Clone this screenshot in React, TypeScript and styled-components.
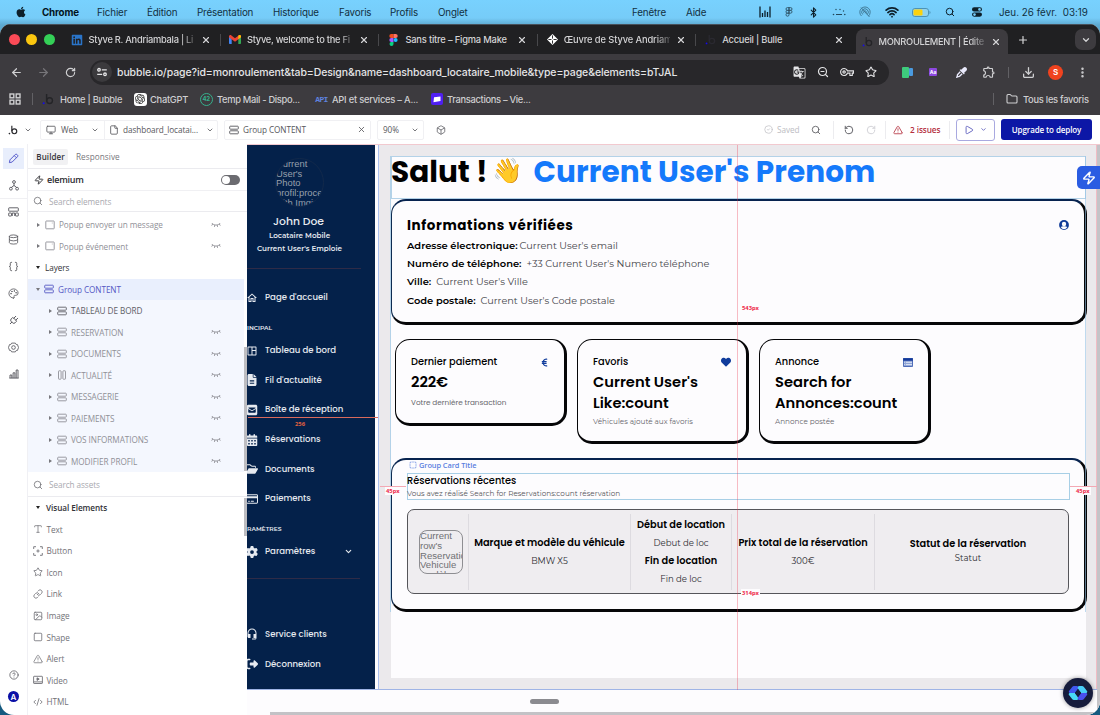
import React, { ReactNode } from "react";
import styled, { createGlobalStyle } from "styled-components";
import {
  ArrowLeft, ArrowRight, RotateCw, RotateCcw, Search, ZoomOut, Star, X, Plus, ChevronDown, Download,
  EllipsisVertical, Folder, Monitor, File, Box, CircleCheck, TriangleAlert, Play,
  Database, Braces, Palette, Plug, CircleQuestionMark, Zap, Type, Link, Image,
  Square, CodeXml, Bluetooth, Wifi, SquareDashed,
} from "lucide-react";
import {
  FaApple, FaLinkedin, FaHeart, FaEuroSign, FaCalendarDays, FaRegFolderOpen, FaFileLines, FaGear,
  FaSquareEnvelope, FaRegCreditCard, FaRightFromBracket, FaEyeDropper,
} from "react-icons/fa6";
import {
  MdOutlineHome, MdOutlineSpaceDashboard, MdHeadsetMic, MdOutlineVpnKey, MdGTranslate,
  MdOutlineExtension,
} from "react-icons/md";
import { SiOpenai } from "react-icons/si";

const mac = `Inter, "Liberation Sans", sans-serif`;
const ui = `"Open Sans", "Noto Sans", sans-serif`;
const poppins = `Poppins, Inter, sans-serif`;
const montserrat = `Montserrat, Inter, sans-serif`;

const GlobalStyle = createGlobalStyle`
  * { box-sizing: border-box; }
  body { margin: 0; overflow: hidden; font-family: ${ui}; }
  svg { display: block; flex: none; }
`;

const Desktop = styled.div`
  width: 1100px;
  height: 715px;
  overflow: hidden;
  display: flex;
  flex-direction: column;
  background: linear-gradient(#78d1fe 0, #76ccf8 18px, #5da9d0 25px, #14506f 60%, #155a80 100%);
`;

const Row = styled.div<{ $gap?: number }>`
  display: flex;
  align-items: center;
  gap: ${({ $gap }) => $gap || 0}px;
`;

const Slot = styled.span<{ $w: number; $c?: string }>`
  width: ${({ $w }) => $w}px;
  flex: none;
  display: flex;
  align-items: center;
  justify-content: center;
  color: ${({ $c }) => $c || "inherit"};
`;

const Spacer = styled.div`
  flex: 1;
`;

const Rule = styled.span<{ $h: number; $c: string }>`
  width: 1px;
  height: ${({ $h }) => $h}px;
  background: ${({ $c }) => $c};
  flex: none;
`;

/* ---------- mac menu bar ---------- */

const MenuBar = styled.div`
  height: 24px;
  flex: none;
  display: flex;
  align-items: center;
  font: 400 9.8px ${mac};
  letter-spacing: -0.16px;
  color: #12303f;
  padding-right: 12px;
  svg { color: #0d1f2a; }
`;
const MenuItem = styled.span<{ $w: number; $bold?: boolean }>`
  width: ${({ $w }) => $w}px;
  flex: none;
  font-weight: ${({ $bold }) => ($bold ? 700 : 400)};
  color: ${({ $bold }) => ($bold ? "#04141d" : "inherit")};
`;
const Clock = styled.span`
  margin-left: 8px;
  white-space: pre;
  letter-spacing: 0.03px;
`;

/* ---------- browser chrome ---------- */

const BrowserWindow = styled.div`
  flex: 1;
  min-height: 0;
  display: flex;
  flex-direction: column;
  border-radius: 11px 11px 14px 14px;
  overflow: hidden;
  background: #fff;
  position: relative;
`;
const TabStrip = styled.div`
  height: 30px;
  flex: none;
  background: #202022;
  border-top: 1px solid #47505a;
  display: flex;
  align-items: center;
  padding-left: 9px;
  font: 500 9.3px ${mac};
  letter-spacing: -0.22px;
  color: #d4d4d6;
`;
const Light = styled.span<{ $c: string }>`
  width: 11px;
  height: 11px;
  border-radius: 50%;
  background: ${({ $c }) => $c};
`;
const Tab = styled.div<{ $active?: boolean }>`
  width: ${({ $active }) => ($active ? 152 : 158.4)}px;
  height: ${({ $active }) => ($active ? "25px" : "12px")};
  flex: none;
  display: flex;
  align-items: center;
  gap: 6px;
  padding-left: ${({ $active }) => ($active ? 5 : 9)}px;
  margin-left: ${({ $active }) => ($active ? 2 : 0)}px;
  align-self: ${({ $active }) => ($active ? "flex-end" : "center")};
  background: ${({ $active }) => ($active ? "#3d3b3f" : "transparent")};
  border-radius: ${({ $active }) => ($active ? "8px 8px 0 0" : "0")};
  border-left: 1px solid ${({ $active }) => ($active ? "transparent" : "#48484b")};
  &:nth-of-type(2) { border-left-color: transparent; }
`;
const TabTitle = styled.span<{ $fade?: boolean; $ls?: number }>`
  width: 106px;
  flex: none;
  white-space: nowrap;
  line-height: 14px;
  letter-spacing: ${({ $ls }) => ($ls === undefined ? -0.22 : $ls)}px;
  ${({ $fade }) => $fade && "mask-image: linear-gradient(90deg, #000 86%, transparent 104%);"}
`;
const TabMenu = styled.span`
  width: 21px;
  height: 21px;
  border-radius: 7px;
  background: #3d3b3f;
  display: flex;
  align-items: center;
  justify-content: center;
  margin-right: 4px;
`;
const Toolbar = styled.div`
  height: 36px;
  flex: none;
  background: #3d3b3f;
  display: flex;
  align-items: center;
  padding-left: 3px;
  color: #d0d0d2;
`;
const AddressBar = styled.div`
  width: 799px;
  height: 25px;
  border-radius: 13px;
  background: #28272a;
  display: flex;
  align-items: center;
  padding: 0 6px 0 2px;
  margin-left: 6px;
  margin-right: 5px;
  font: 500 10.5px ${mac};
  letter-spacing: -0.1px;
  color: #e4e4e6;
`;
const TuneButton = styled.span`
  width: 20px;
  height: 20px;
  border-radius: 50%;
  background: #3b3a3d;
  display: flex;
  align-items: center;
  justify-content: center;
  margin-right: 5px;
`;
const Avatar = styled.span<{ $c: string; $s: number }>`
  width: ${({ $s }) => $s}px;
  height: ${({ $s }) => $s}px;
  border-radius: 50%;
  background: ${({ $c }) => $c};
  color: #fff;
  font: 600 8px ${mac};
  display: flex;
  align-items: center;
  justify-content: center;
`;
const Bookmarks = styled.div`
  height: 25px;
  flex: none;
  background: #3d3b3f;
  display: flex;
  align-items: center;
  padding: 0 10px 7px 0;
  font: 500 9.3px ${mac};
  letter-spacing: -0.22px;
  color: #cfcfd1;
`;
const Bookmark = styled.span<{ $w: number; $ls?: number }>`
  width: ${({ $w }) => $w}px;
  flex: none;
  white-space: nowrap;
  letter-spacing: ${({ $ls }) => ($ls === undefined ? -0.25 : $ls)}px;
`;
const Badge = styled.span<{ $c: string; $w?: number; $h?: number; $r?: number }>`
  width: ${({ $w }) => $w || 12}px;
  height: ${({ $h }) => $h || 12}px;
  border-radius: ${({ $r }) => ($r === undefined ? 3 : $r)}px;
  background: ${({ $c }) => $c};
  display: flex;
  align-items: center;
  justify-content: center;
`;
const TempBadge = styled.span`
  width: 13px;
  height: 13px;
  border-radius: 50%;
  border: 1.5px solid #35b08c;
  color: #35b08c;
  font: 700 6px/10px ${mac};
  letter-spacing: -0.3px;
  text-align: center;
`;
const ApiMark = styled.span`
  font: 700 8px "Liberation Mono", monospace;
  letter-spacing: -0.6px;
  color: #5f83e0;
`;
const AaMark = styled.span`
  font: 700 5px ${mac};
  color: #fff;
`;

/* ---------- editor bar ---------- */

const EditorBar = styled.div`
  height: 29px;
  flex: none;
  background: #fff;
  display: flex;
  align-items: center;
  font: 400 8.2px ${ui};
  letter-spacing: -0.07px;
  color: #57575c;
`;
const Picker = styled.div<{ $w: number; $ml?: number }>`
  width: ${({ $w }) => $w}px;
  height: 20px;
  margin-left: ${({ $ml }) => $ml || 0}px;
  border: 1px solid #f0f0f3;
  border-radius: 2px;
  display: flex;
  align-items: center;
  white-space: nowrap;
`;
const Label = styled.span<{ $w?: number; $c?: string; $bold?: boolean }>`
  width: ${({ $w }) => ($w ? `${$w}px` : "auto")};
  flex: none;
  white-space: nowrap;
  color: ${({ $c }) => $c || "inherit"};
  font-weight: ${({ $bold }) => ($bold ? 600 : 400)};
`;
const PreviewButton = styled.div`
  width: 39px;
  height: 22px;
  margin: 0 6px 0 6px;
  border: 1px solid #a9a9e0;
  border-radius: 3px;
  display: flex;
  align-items: center;
  justify-content: space-between;
  padding: 0 7px;
  color: #5152b8;
`;
const DeployButton = styled.div`
  width: 91px;
  height: 21px;
  border-radius: 3px;
  margin-right: 8px;
  background: #0c17a6;
  color: #fff;
  font: 600 8px/21px ${ui};
  letter-spacing: -0.1px;
  text-align: center;
`;

/* ---------- left side ---------- */

const Body = styled.div`
  flex: 1;
  min-height: 0;
  display: flex;
`;
const Rail = styled.div`
  width: 28px;
  flex: none;
  border-right: 1px solid #f0f0f4;
  display: flex;
  flex-direction: column;
  align-items: center;
  padding-top: 1px;
  color: #55555b;
`;
const RailItem = styled.div<{ $active?: boolean; $line?: boolean }>`
  width: 27px;
  height: 27px;
  display: flex;
  align-items: center;
  justify-content: center;
  color: ${({ $active }) => ($active ? "#4a50c8" : "inherit")};
  background: ${({ $active }) => ($active ? "linear-gradient(#e8eefc, #e8eefc) 3px 3px / 21px 21px no-repeat" : "none")};
  border-bottom: 1px solid ${({ $line }) => ($line ? "#f0f0f3" : "transparent")};
`;
const RailFoot = styled.div`
  margin-top: auto;
  margin-bottom: 13px;
  display: flex;
  flex-direction: column;
  align-items: center;
  gap: 11px;
`;
const Panel = styled.div`
  width: 219px;
  flex: none;
  background: #fff;
  display: flex;
  flex-direction: column;
  font: 400 8.2px ${ui};
  letter-spacing: -0.07px;
`;
const PanelTabs = styled.div`
  height: 25px;
  flex: none;
  border-bottom: 1px solid #ebebef;
  display: flex;
  align-items: center;
  padding: 1px 0 0 5px;
  gap: 8px;
  color: #77777d;
  letter-spacing: 0.06px;
`;
const PanelTabActive = styled.span`
  width: 35px;
  height: 16px;
  border-radius: 2px;
  background: #f1f1f3;
  color: #333338;
  font-weight: 600;
  font-size: 8px;
  line-height: 16px;
  text-align: center;
`;
const PluginRow = styled.div`
  height: 22px;
  flex: none;
  border-bottom: 1px solid #f0f0f3;
  display: flex;
  align-items: center;
  padding: 0 7px 0 6px;
  gap: 3px;
  font-size: 9px;
  font-weight: 600;
  letter-spacing: -0.25px;
  color: #2d2d31;
`;
const Toggle = styled.span`
  width: 19px;
  height: 10px;
  border-radius: 5px;
  background: #6b6b70;
  padding: 1px;
  &::after {
    content: "";
    display: block;
    width: 8px;
    height: 8px;
    border-radius: 50%;
    background: #fff;
  }
`;
const SearchRow = styled.div<{ $h: number }>`
  height: ${({ $h }) => $h}px;
  flex: none;
  border-bottom: 1px solid #ebebef;
  display: flex;
  align-items: center;
  padding-left: 5px;
  gap: 6px;
  color: #a9a9af;
  svg { color: #66666c; }
`;
const Tree = styled.div`
  height: 261px;
  flex: none;
  overflow: hidden;
  padding-top: 2px;
  padding-right: 3px;
  position: relative;
`;
const Nested = styled.div`
  background: #f4f7fe;
`;
const TreeRow = styled.div<{ $level: number; $selected?: boolean; $dim?: boolean; $head?: boolean }>`
  height: 21.53px;
  display: flex;
  align-items: center;
  padding-left: ${({ $level }) => 8 + $level * 12}px;
  background: ${({ $selected }) => ($selected ? "#e9effd" : "transparent")};
  color: ${({ $selected, $dim, $head }) => ($selected ? "#5558c4" : $head ? "#333338" : $dim ? "#909097" : "#606066")};
  white-space: nowrap;
`;
const Caret = styled.span<{ $open?: boolean; $dark?: boolean }>`
  width: 0;
  height: 0;
  border: solid transparent;
  ${({ $open, $dark }) =>
    $open
      ? `border-width: 3px 2.5px 0; border-top-color: ${$dark ? "#222" : "#77777c"};`
      : `border-width: 2.5px 0 2.5px 3px; border-left-color: #77777c; margin: 0 1px;`}
`;
const HiddenMark = styled.span`
  margin-left: auto;
  margin-right: 23px;
  color: #8e8e95;
`;
const ScrollThumb = styled.span<{ $top: number; $h: number }>`
  position: absolute;
  right: 0;
  top: ${({ $top }) => $top}px;
  width: 3px;
  height: ${({ $h }) => $h}px;
  background: #bdbdc1;
`;
const Assets = styled.div`
  flex: 1;
  position: relative;
  overflow: hidden;
`;
const AssetRow = styled.div<{ $head?: boolean }>`
  height: 21.55px;
  display: flex;
  align-items: center;
  padding-left: ${({ $head }) => ($head ? 8 : 5)}px;
  gap: ${({ $head }) => ($head ? 6 : 3.5)}px;
  font-weight: ${({ $head }) => ($head ? 600 : 400)};
  color: ${({ $head }) => ($head ? "#333338" : "#727278")};
`;

/* ---------- canvas ---------- */

const Canvas = styled.div`
  flex: 1;
  min-width: 0;
  background: #fdfcfe;
  border-top: 1px solid #f2c9cf;
  position: relative;
  display: flex;
  flex-direction: column;
`;
const Stage = styled.div`
  height: 545px;
  display: flex;
  border-bottom: 1px solid #9fb4e6;
`;
const Nav = styled.div`
  width: 128px;
  flex: none;
  background: #04214a;
  margin-right: 3px;
  overflow: hidden;
  color: #e6eaf0;
`;
const Profile = styled.div`
  height: 124px;
  width: 114px;
  padding: 13px 9px 0 0;
  display: flex;
  flex-direction: column;
  align-items: center;
  border-bottom: 1px solid #2e2b47;
`;
const Photo = styled.div`
  width: 49px;
  height: 49px;
  border-radius: 50%;
  border: 1px solid #12294a;
  overflow: hidden;
  font: 9.4px/9.7px "Liberation Sans", sans-serif;
  color: #98a0ac;
  white-space: pre;
`;
const UserName = styled.div`
  font: 500 10.8px/14px ${poppins};
  margin: 8px 2px 0 0;
`;
const UserRole = styled.div`
  font: 600 7.2px/12px ${montserrat};
  margin-top: 1px;
  white-space: nowrap;
`;
const NavItem = styled.div`
  height: 29.7px;
  display: flex;
  align-items: center;
  font: 500 8.55px ${poppins};
  white-space: nowrap;
  & > svg:first-child { margin-right: 7px; margin-left: -1px; }
`;
const NavCaption = styled.div<{ $h: number }>`
  padding-top: 10px;
  height: ${({ $h }) => $h}px;
  font: 600 6px/10px ${montserrat};
`;
const NavLinks = styled.div`
  padding-top: 14px;
`;
const NavRule = styled.div`
  width: 113px;
  height: 1px;
  background: #2e2b47;
  margin: 11px 0 41px;
`;
const Artboard = styled.div`
  width: 719px;
  background: #ebe9ec;
  border-left: 1px solid #a9bfee;
  border-right: 1px solid #f1bcc4;
  padding: 11px 11px 11px 12px;
`;
const Sheet = styled.div`
  width: 695px;
  height: 522px;
  background: #fdfcfe;
  font-family: ${poppins};
  color: #000;
`;
const Title = styled.div`
  height: 43px;
  box-shadow: inset 0 0 0 1px #b4d2e8;
  display: flex;
  padding-top: 15px;
  font-size: 29.5px;
  line-height: 1px;
  font-weight: 700;
  white-space: nowrap;
`;
const Wave = styled.span`
  font: 24.5px/1px "Noto Color Emoji";
  width: 31px;
  margin: -1px 10px 0 5px;
`;
const Blue = styled.span`
  color: #1479fb;
  letter-spacing: 0.07px;
`;
const Card = styled.div<{ $w?: number; $h: number; $big?: boolean }>`
  width: ${({ $w }) => ($w ? `${$w}px` : "696px")};
  height: ${({ $h }) => $h}px;
  flex: none;
  background: #fdfcfe;
  border: solid #060608;
  border-width: 1px 3px 3px 1px;
  ${({ $big }) => $big && "border-top-color: #07234f; border-left-color: #0e2c52; border-top-width: 2px;"}
  border-radius: 15px;
`;
const InfoCard = styled(Card)`
  padding: 15px 16px 0 15px;
  display: flex;
  justify-content: space-between;
  align-items: flex-start;
  & > svg { margin: 4px -1px 0 0; }
`;
const InfoTitle = styled.div`
  font-size: 13.5px;
  line-height: 20px;
  font-weight: 700;
  letter-spacing: 0.62px;
`;
const Field = styled.div<{ $gap: number }>`
  height: 18.2px;
  font: 600 9.9px/18px ${montserrat};
  display: flex;
  align-items: baseline;
  white-space: nowrap;
  span {
    margin-left: ${({ $gap }) => $gap}px;
    font-size: 9.72px;
    font-weight: 400;
    color: #46464b;
  }
`;
const Stats = styled.div`
  display: flex;
  align-items: flex-start;
  gap: 10px;
  padding: 14px 0 0 4px;
  height: 133px;
`;
const StatCard = styled(Card)`
  padding: 14px 13px 0 15px;
`;
const StatHead = styled.div`
  height: 16px;
  display: flex;
  align-items: center;
  justify-content: space-between;
  font-size: 9.8px;
  font-weight: 500;
  svg { color: #103c9c; }
`;
const StatValue = styled.div`
  font-size: 14.7px;
  line-height: 20.5px;
  font-weight: 600;
  white-space: pre;
  margin-top: 2px;
`;
const StatNote = styled.div<{ $mt: number; $light?: boolean }>`
  font: 400 7.28px/12px ${({ $light }) => ($light ? montserrat : poppins)};
  margin-top: ${({ $mt }) => $mt}px;
  color: #66666c;
  white-space: nowrap;
`;
const Bookings = styled(Card)`
  padding: 13px 13px 0 15px;
`;
const GroupTitle = styled.div`
  height: 27px;
  width: 663px;
  box-shadow: inset 0 0 0 1px #a8cfe6;
  padding-top: 1px;
  font-size: 9.8px;
  line-height: 14px;
  font-weight: 500;
  small {
    display: block;
    font: 400 7.28px/12px ${montserrat};
    color: #55555b;
  }
`;
const Booking = styled.div`
  margin: 9px 0 0;
  width: 662px;
  height: 85px;
  border: 1px solid #55555a;
  border-radius: 7px;
  background: #efedf0;
  padding: 4px 0 3px;
  display: flex;
`;
const Column = styled.div<{ $w: number; $first?: boolean; $raise?: number }>`
  width: ${({ $w }) => $w}px;
  flex: none;
  border-left: 1px solid ${({ $first }) => ($first ? "transparent" : "#dddbe0")};
  display: flex;
  flex-direction: column;
  align-items: center;
  justify-content: center;
  padding-bottom: ${({ $raise }) => $raise || 0}px;
  white-space: nowrap;
`;
const Thumb = styled.div`
  width: 44px;
  height: 44px;
  margin-left: 5px;
  border: 1px solid #8e8e92;
  border-radius: 8px;
  overflow: hidden;
  font: 9.6px/9.8px "Liberation Sans", sans-serif;
  color: #707074;
  white-space: pre;
`;
const Strong = styled.div`
  font-size: 9.77px;
  line-height: 18px;
  font-weight: 600;
`;
const Plain = styled.div<{ $h?: number }>`
  font: 400 8.55px/${({ $h }) => $h || 18}px ${montserrat};
  color: #2c2c30;
`;

/* alignment guides drawn over the page */
const Guide = styled.div<{ $x: number; $y: number; $w: number; $h: number; $c: string }>`
  position: absolute;
  left: ${({ $x }) => $x}px;
  top: ${({ $y }) => $y}px;
  width: ${({ $w }) => $w}px;
  height: ${({ $h }) => $h}px;
  background: ${({ $c }) => $c};
`;
const Measure = styled.span<{ $x: number; $y: number; $c?: string; $plain?: boolean }>`
  position: absolute;
  left: ${({ $x }) => $x}px;
  top: ${({ $y }) => $y}px;
  padding: 0 1px;
  font: 700 5.8px/8px ${ui};
  color: ${({ $c }) => $c || "#ee2748"};
  background: ${({ $plain }) => ($plain ? "transparent" : "#fdfcfe")};
`;
const GroupTag = styled.span`
  position: absolute;
  left: 162px;
  top: 315px;
  display: flex;
  align-items: center;
  gap: 2px;
  font: 600 7.4px/10px ${ui};
  letter-spacing: -0.07px;
  color: #5a7fe0;
`;
const PluginTab = styled.div`
  position: absolute;
  right: 0;
  top: 21px;
  width: 23px;
  height: 23px;
  border-radius: 5px 0 0 5px;
  background: #2a5ce2;
  color: #fff;
  display: flex;
  align-items: center;
  justify-content: center;
`;
const SideScroll = styled.div`
  position: absolute;
  right: 0;
  top: 0;
  width: 3px;
  height: 570px;
  background: #c4c3c7;
`;
const Handle = styled.div`
  width: 29px;
  height: 5px;
  border-radius: 3px;
  background: #8b8b90;
  margin: 9px 0 0 283px;
`;
const BottomScroll = styled.div`
  margin: auto 0 0 23px;
  height: 3px;
  background: #c3c2c6;
`;
const Chat = styled.div`
  position: absolute;
  right: 7px;
  bottom: 7px;
  width: 30px;
  height: 30px;
  border-radius: 50%;
  background: #161c3c;
  box-shadow: 0 0 4px rgba(0, 0, 0, 0.4);
  display: flex;
  align-items: center;
  justify-content: center;
`;

/* ---------- drawings ---------- */

const BubbleMark = ({ c, s = 11 }: { c: string; s?: number }) => (
  <svg width={s} height={s} viewBox="0 0 12 12" fill="none">
    <circle cx="7.6" cy="7.6" r="2.9" stroke={c} strokeWidth="1.4" />
    <path d="M4.6 1v6.6" stroke={c} strokeWidth="1.4" />
    <circle cx="1.7" cy="10.3" r="1" fill={c === "#2a2a2e" ? c : "#1408ef"} />
  </svg>
);

const TuneIcon = () => (
  <svg width="10" height="10" viewBox="0 0 10 10" fill="none" stroke="currentColor" strokeWidth="1.3">
    <circle cx="2" cy="2.8" r="1.3" />
    <path d="M4.8 2.8h5M.2 7.3h5" />
    <circle cx="8" cy="7.3" r="1.3" />
  </svg>
);

const GmailMark = () => (
  <svg width="12" height="9" viewBox="0 0 12 9">
    <path d="M0 1.5v6.7c0 .5.3.8.8.8h1.9V4z" fill="#4285f4" />
    <path d="M12 1.5v6.7c0 .5-.3.8-.8.8H9.3V4z" fill="#34a853" />
    <path d="M0 1.4C0 0 1.4-.4 2.4.4L6 3.2 9.6.4C10.6-.4 12 0 12 1.4v.9L6 6.7 0 2.3z" fill="#ea4335" />
    <path d="M9.3.6C10.4-.5 12 0 12 1.4v.9L9.3 4.3z" fill="#fbbc04" />
  </svg>
);

const FigmaMark = () => (
  <svg width="9" height="12" viewBox="0 0 9 12">
    <path d="M2.3 0h2.2v4H2.3a2 2 0 0 1 0-4z" fill="#f24e1e" />
    <path d="M4.5 0h2.2a2 2 0 0 1 0 4H4.5z" fill="#ff7262" />
    <path d="M2.3 4h2.2v4H2.3a2 2 0 0 1 0-4z" fill="#a259ff" />
    <circle cx="6.6" cy="6" r="2" fill="#1abcfe" />
    <path d="M2.3 8h2.2v2a2 2 0 1 1-2.2-2z" fill="#0acf83" />
  </svg>
);

const CompassMark = () => (
  <svg width="11" height="11" viewBox="0 0 12 12">
    <path d="M6 0l6 6-6 6-6-6z" fill="#fff" />
    <path d="M6 1.5v9M1.5 6h9" stroke="#202022" strokeWidth="1" />
    <circle cx="6" cy="6" r="1.2" fill="#fff" />
  </svg>
);

const GroupIcon = ({ columns }: { columns?: boolean }) => (
  <svg width="10" height="10" viewBox="0 0 10 10" fill="none" stroke="currentColor" strokeWidth=".9">
    {columns ? (
      <>
        <rect x="1.5" y=".8" width="2.6" height="8.4" rx=".6" />
        <rect x="5.9" y=".8" width="2.6" height="8.4" rx=".6" />
      </>
    ) : (
      <>
        <rect x=".7" y="1.2" width="8.6" height="3" rx=".7" />
        <rect x=".7" y="5.8" width="8.6" height="3" rx=".7" />
      </>
    )}
  </svg>
);

const PopupIcon = () => (
  <svg width="10" height="10" viewBox="0 0 10 10" fill="none" stroke="currentColor" strokeWidth=".9">
    <rect x=".8" y="1" width="8.4" height="7.8" rx=".5" />
    <path d="M6.8 3h1" strokeWidth=".6" />
  </svg>
);

const ClosedEye = () => (
  <svg width="10" height="6" viewBox="0 0 10 6" fill="none" stroke="currentColor" strokeWidth=".9">
    <path d="M.8 1c2 2.7 6.4 2.7 8.4 0M1.7 2L.7 3.6M3.8 3l-.4 1.9M6.2 3l.4 1.9M8.3 2l1 1.6" />
  </svg>
);

const WorkflowIcon = () => (
  <svg width="10" height="11" viewBox="0 0 10 11" fill="none" stroke="currentColor" strokeWidth=".9">
    <circle cx="5" cy="2" r="1.4" />
    <circle cx="1.9" cy="8.7" r="1.4" />
    <circle cx="8.1" cy="8.7" r="1.4" />
    <path d="M5 3.4v2.4M5 5.5L2.5 7.3M5 5.5l2.5 1.8" />
  </svg>
);

const ReusableIcon = () => (
  <svg width="11" height="10" viewBox="0 0 11 10" fill="none" stroke="currentColor" strokeWidth=".9">
    <rect x=".7" y=".8" width="9.6" height="3.4" rx=".5" />
    <rect x=".7" y="6" width="2.8" height="3" rx=".4" />
    <rect x="7.5" y="6" width="2.8" height="3" rx=".4" />
    <path d="M4.3 9V6h2.4v3" />
  </svg>
);

const HexGear = () => (
  <svg width="11" height="11" viewBox="0 0 12 12" fill="none" stroke="currentColor" strokeWidth=".9">
    <path d="M4 1.2h4l1 1.6h1.3L11.5 6l-1.2 3.2H9l-1 1.6H4L3 9.2H1.7L.5 6l1.2-3.2H3z" />
    <circle cx="6" cy="6" r="2" />
  </svg>
);

const BarsIcon = () => (
  <svg width="10" height="10" viewBox="0 0 10 10" fill="none" stroke="currentColor" strokeWidth=".9">
    <path d="M1 9V6h1.8v3M4.1 9V3.8h1.8V9M7.2 9V1H9v8M.3 9.1h9.4" />
  </svg>
);

const ButtonIcon = () => (
  <svg width="10" height="10" viewBox="0 0 10 10" fill="none" stroke="currentColor" strokeWidth=".9">
    <path d="M.7 3V.7H3M7 .7h2.3V3M9.3 7v2.3H7M3 9.3H.7V7M5 3.4v3.2M3.4 5h3.2" />
  </svg>
);

const VideoIcon = () => (
  <svg width="10" height="10" viewBox="0 0 10 10" fill="none" stroke="currentColor" strokeWidth=".9">
    <rect x=".6" y="1.3" width="8.8" height="7.2" rx=".5" />
    <path d="M.6 6.9h8.8" />
    <path d="M4 2.8l2.2 1.3L4 5.4z" fill="currentColor" />
  </svg>
);

const GridIcon = () => (
  <svg width="12" height="12" viewBox="0 0 12 12" fill="none" stroke="currentColor" strokeWidth="1.4">
    <rect x="1" y="1" width="3.8" height="3.8" />
    <rect x="7.2" y="1" width="3.8" height="3.8" />
    <rect x="1" y="7.2" width="3.8" height="3.8" />
    <rect x="7.2" y="7.2" width="3.8" height="3.8" />
  </svg>
);

const AccountIcon = () => (
  <svg width="10" height="10" viewBox="0 0 10 10">
    <circle cx="5" cy="5" r="4.9" fill="#0f3a97" />
    <circle cx="5" cy="4" r="2.2" fill="#fdfcfe" />
    <path d="M1.7 7C3 6 7 6 8.3 7 7.4 8.5 6.2 9.2 5 9.2S2.6 8.5 1.7 7z" fill="#fdfcfe" />
  </svg>
);

const ListCard = () => (
  <svg width="10" height="9" viewBox="0 0 10 9">
    <rect width="10" height="9" rx="1" fill="#8fa4d6" />
    <path d="M0 1a1 1 0 0 1 1-1h8a1 1 0 0 1 1 1v1.8H0z" fill="#14399a" />
    <path d="M3 4.3h6M3 6.6h6M1.2 4.3h1M1.2 6.6h1" stroke="#dfe6f6" strokeWidth="1" />
    <rect x=".4" y=".4" width="9.2" height="8.2" rx=".8" fill="none" stroke="#2b4fa8" strokeWidth=".7" />
  </svg>
);

const ChatLogo = () => (
  <svg width="20" height="16" viewBox="0 0 20 16">
    <path d="M6 1h3.5l1 2-3.7 5H2.2C.8 8 .4 6.8 1.2 5.8L4.2 2C4.7 1.3 5.2 1 6 1z" fill="#4057f0" />
    <path d="M1.5 8h5.3l3.7 5-1 2H6c-.8 0-1.4-.3-1.9-1L1 10c-.5-.7-.3-1.5.5-2z" fill="#48d9f6" />
    <path d="M14 1h-3.5l-1 2 3.7 5h5.3c.8-.5 1-1.3.5-2l-3.100-4C15.400 1.300 14.800 1 14 1z" fill="#48cdf8" />
    <path d="M14 15h-3.500l-1-2 3.700-5h5.300c.8.500 1 1.300.5 2l-3.100 4c-.5.700-1.100 1-1.900 1z" fill="#4a50f0" />
    <path d="M10 4.200L13 8l-3 3.800L7 8z" fill="#161c3c" />
  </svg>
);

const StatusBars = () => (
  <svg width="12" height="12" viewBox="0 0 12 12" stroke="currentColor" strokeWidth="1.3">
    <path d="M1 .5v11M11 .5v11M3.5 7v4M6 4.5V11M8.500 6v5" />
  </svg>
);

const MenuFigma = () => (
  <svg width="8" height="10" viewBox="0 0 8 10" fill="none" stroke="#2c5266" strokeWidth=".9">
    <path d="M4 .6H2.4a1.4 1.4 0 0 0 0 2.8H4zM4 .6h1.600a1.400 1.400 0 0 1 0 2.800H4zM4 3.400H2.400a1.400 1.400 0 0 0 0 2.800H4zM4 3.400h1.600a1.400 1.400 0 0 1 0 2.800H4zM4 6.200H2.400A1.500 1.500 0 1 0 4 7.700z" />
  </svg>
);

const DotsIcon = () => (
  <svg width="14" height="8" viewBox="0 0 14 8" fill="#23485b">
    <circle cx="4" cy="1.5" r=".7" />
    <circle cx="8" cy="1.5" r=".7" />
    <circle cx="11.5" cy="3" r=".7" />
    <circle cx="1.5" cy="6.5" r=".8" />
    <circle cx="12.8" cy="6.5" r=".8" />
    <path d="M4 6h6v1H4z" />
  </svg>
);

const AirdropOff = () => (
  <svg width="12" height="12" viewBox="0 0 12 12" fill="none" stroke="#3c7490" strokeWidth=".9">
    <path d="M2.5 10a5.2 5.2 0 1 1 7 0M3.7 8.5a3.3 3.3 0 1 1 4.6 0M5 7.2a1.4 1.4 0 1 1 2 0M2 1.5L10.5 11" />
  </svg>
);

const Battery = () => (
  <svg width="19" height="9" viewBox="0 0 19 9">
    <rect x=".5" y=".5" width="16" height="8" rx="2.4" fill="#8fd3ef" stroke="#4d93b5" />
    <rect x="1.5" y="1.5" width="9" height="6" rx="1.2" fill="#fcd20c" />
    <path d="M17.5 3v3c.8-.3 1-.9 1-1.500s-.2-1.200-1-1.500z" fill="#4d93b5" />
  </svg>
);

const ControlIcon = () => (
  <svg width="10" height="10" viewBox="0 0 10 10" fill="currentColor">
    <rect y=".3" width="10" height="4.2" rx="2.1" />
    <circle cx="7.5" cy="2.4" r="1.3" fill="#76ccf8" />
    <rect y="5.5" width="10" height="4.2" rx="2.1" />
    <circle cx="2.5" cy="7.6" r="1.3" fill="#76ccf8" />
  </svg>
);

/* ---------- data ---------- */

interface TabInfo {
  icon: ReactNode;
  title: string;
  fade?: boolean;
  active?: boolean;
  ls?: number;
}
const tabs: TabInfo[] = [
  { icon: <FaLinkedin size={12} color="#2a74c8" />, title: "Styve R. Andriambala | Li", fade: true, ls: -0.26 },
  { icon: <GmailMark />, title: "Styve, welcome to the Fi", fade: true, ls: -0.25 },
  { icon: <FigmaMark />, title: "Sans titre – Figma Make", ls: -0.17 },
  { icon: <CompassMark />, title: "Œuvre de Styve Andriam", fade: true, ls: -0.1 },
  { icon: <BubbleMark c="#2a2930" />, title: "Accueil | Bulle", ls: -0.2 },
  { icon: <BubbleMark c="#242427" />, title: "MONROULEMENT | Édite", fade: true, active: true, ls: -0.29 },
];

const layers = [
  "TABLEAU DE BORD", "RESERVATION", "DOCUMENTS", "ACTUALITÉ", "MESSAGERIE", "PAIEMENTS",
  "VOS INFORMATIONS", "MODIFIER PROFIL",
];

const assets: [string, ReactNode][] = [
  ["Text", <Type size={10} strokeWidth={1.8} />],
  ["Button", <ButtonIcon />],
  ["Icon", <Star size={10} strokeWidth={2} />],
  ["Link", <Link size={10} strokeWidth={2} />],
  ["Image", <Image size={10} strokeWidth={2} />],
  ["Shape", <Square size={10} strokeWidth={2} />],
  ["Alert", <TriangleAlert size={10} strokeWidth={1.8} />],
  ["Video", <VideoIcon />],
  ["HTML", <CodeXml size={10} strokeWidth={2} />],
];

const App = () => (
  <Desktop>
    <GlobalStyle />
    <MenuBar>
      <Slot $w={42}><FaApple size={12} /></Slot>
      <MenuItem $w={55} $bold>Chrome</MenuItem>
      <MenuItem $w={50}>Fichier</MenuItem>
      <MenuItem $w={50}>Édition</MenuItem>
      <MenuItem $w={76}>Présentation</MenuItem>
      <MenuItem $w={66}>Historique</MenuItem>
      <MenuItem $w={51}>Favoris</MenuItem>
      <MenuItem $w={48}>Profils</MenuItem>
      <MenuItem $w={194}>Onglet</MenuItem>
      <MenuItem $w={54}>Fenêtre</MenuItem>
      <MenuItem $w={67}>Aide</MenuItem>
      <Slot $w={24}><StatusBars /></Slot>
      <Slot $w={24}><MenuFigma /></Slot>
      <Slot $w={24}><Bluetooth size={11} strokeWidth={2.4} /></Slot>
      <Slot $w={27}><DotsIcon /></Slot>
      <Slot $w={26}><AirdropOff /></Slot>
      <Slot $w={28}><Wifi size={14} strokeWidth={3} /></Slot>
      <Slot $w={30}><Battery /></Slot>
      <Slot $w={27}><Search size={10} strokeWidth={2.4} /></Slot>
      <Slot $w={28}><ControlIcon /></Slot>
      <Clock>Jeu. 26 févr.  03:19</Clock>
    </MenuBar>

    <BrowserWindow>
      <TabStrip>
        <Row $gap={6.3}>
          <Light $c="#fb4b57" />
          <Light $c="#fbc70f" />
          <Light $c="#34d057" />
        </Row>
        <Slot $w={7} />
        {tabs.map(({ icon, title, fade, active, ls }) => (
          <Tab key={title} $active={active}>
            <Slot $w={11}>{icon}</Slot>
            <TabTitle $fade={fade} $ls={ls}>{title}</TabTitle>
            <Slot $w={10}><X size={10} strokeWidth={2.8} /></Slot>
          </Tab>
        ))}
        <Slot $w={30}><Plus size={12} strokeWidth={2.4} /></Slot>
        <Spacer />
        <TabMenu><ChevronDown size={10} strokeWidth={3} /></TabMenu>
      </TabStrip>
      <Toolbar>
        <Slot $w={27}><ArrowLeft size={13} strokeWidth={2.2} /></Slot>
        <Slot $w={27} $c="#77767a"><ArrowRight size={13} strokeWidth={2.2} /></Slot>
        <Slot $w={27}><RotateCw size={11} strokeWidth={2.6} /></Slot>
        <AddressBar>
          <TuneButton><TuneIcon /></TuneButton>
          <span>bubble.io/page?id=monroulement&amp;tab=Design&amp;name=dashboard_locataire_mobile&amp;type=page&amp;elements=bTJAL</span>
          <Spacer />
          <Slot $w={24}><MdGTranslate size={13} /></Slot>
          <Slot $w={24}><ZoomOut size={12} strokeWidth={2.4} /></Slot>
          <Slot $w={24}><MdOutlineVpnKey size={14} /></Slot>
          <Slot $w={24}><Star size={12} strokeWidth={2.2} /></Slot>
        </AddressBar>
        <Slot $w={26}>
          <Badge $c="#3ecb7c" $w={7} $h={11} $r={1} />
          <Badge $c="#4a9ae0" $w={4} $h={8} $r={1} />
        </Slot>
        <Slot $w={26}><Badge $c="#8d48e0" $w={8} $h={8} $r={1}><AaMark>Aa</AaMark></Badge></Slot>
        <Slot $w={30}><FaEyeDropper size={11} color="#e9e9fb" /></Slot>
        <Slot $w={26}><MdOutlineExtension size={14} /></Slot>
        <Slot $w={13}><Rule $h={11} $c="#626165" /></Slot>
        <Slot $w={27}><Download size={13} strokeWidth={2.4} /></Slot>
        <Slot $w={27}><Avatar $c="#f0431f" $s={15}>S</Avatar></Slot>
        <Slot $w={27}><EllipsisVertical size={13} strokeWidth={2.6} /></Slot>
      </Toolbar>
      <Bookmarks>
        <Slot $w={30}><GridIcon /></Slot>
        <Slot $w={5}><Rule $h={12} $c="#626165" /></Slot>
        <Slot $w={25}><BubbleMark c="#242427" s={12} /></Slot>
        <Bookmark $w={71}>Home | Bubble</Bookmark>
        <Slot $w={18}><Badge $c="#fff" $w={13} $h={13}><SiOpenai size={10} color="#222" /></Badge></Slot>
        <Slot $w={1} />
        <Bookmark $w={47}>ChatGPT</Bookmark>
        <Slot $w={18}><TempBadge>42</TempBadge></Slot>
        <Slot $w={2} />
        <Bookmark $w={97} $ls={-0.3}>Temp Mail - Dispo...</Bookmark>
        <Slot $w={15}><ApiMark>API</ApiMark></Slot>
        <Slot $w={3} />
        <Bookmark $w={96} $ls={-0.22}>API et services – A...</Bookmark>
        <Slot $w={18}>
          <Badge $c="#4f1ff2" $r={2}>
            <svg width="8" height="7" viewBox="0 0 8 7"><path d="M1 1.2L7.5.5v4.6L.5 6.2z" fill="#fff" /></svg>
          </Badge>
        </Slot>
        <Slot $w={1} />
        <Bookmark $w={90} $ls={-0.3}>Transactions – Vie...</Bookmark>
        <Spacer />
        <Rule $h={12} $c="#626165" />
        <Slot $w={6} />
        <Slot $w={23}><Folder size={12} strokeWidth={2.2} /></Slot>
        <Bookmark $w={67}>Tous les favoris</Bookmark>
      </Bookmarks>

      <EditorBar>
        <Slot $w={26}><BubbleMark c="#2a2a2e" s={10} /></Slot>
        <Slot $w={4}><ChevronDown size={8} strokeWidth={2.4} /></Slot>
        <Picker $w={178} $ml={10}>
          <Slot $w={20}><Monitor size={10} strokeWidth={2} /></Slot>
          <Slot $w={-0} />
          <Label $w={27} $c="#57575c">Web</Label>
          <Slot $w={14}><ChevronDown size={8} strokeWidth={2.4} /></Slot>
          <Slot $w={2} />
          <Rule $h={20} $c="#f0f0f3" />
          <Slot $w={18}><File size={10} strokeWidth={2} /></Slot>
          <Label $w={80}>dashboard_locatai...</Label>
          <Slot $w={14}><ChevronDown size={8} strokeWidth={2.4} /></Slot>
        </Picker>
        <Picker $w={147} $ml={6}>
          <Slot $w={18}><GroupIcon /></Slot>
          <Label>Group CONTENT</Label>
          <Spacer />
          <Slot $w={18}><X size={9} strokeWidth={2.2} /></Slot>
        </Picker>
        <Picker $w={47} $ml={6}>
          <Slot $w={5} />
          <Label>90%</Label>
          <Spacer />
          <Slot $w={16}><ChevronDown size={8} strokeWidth={2.4} /></Slot>
        </Picker>
        <Slot $w={33}><Box size={10} strokeWidth={1.8} /></Slot>
        <Spacer />
        <Slot $w={17} $c="#c0c0c5"><CircleCheck size={9} strokeWidth={2} /></Slot>
        <Label $w={28} $c="#bcbcc2">Saved</Label>
        <Slot $w={22}><Search size={10} strokeWidth={2} /></Slot>
        <Slot $w={13}><Rule $h={18} $c="#ececef" /></Slot>
        <Slot $w={17}><RotateCcw size={10} strokeWidth={2.2} /></Slot>
        <Slot $w={27} $c="#cfcfd4"><RotateCw size={10} strokeWidth={2.2} /></Slot>
        <Slot $w={1} />
        <Rule $h={18} $c="#ececef" />
        <Slot $w={24} $c="#b5303f"><TriangleAlert size={10} strokeWidth={2} /></Slot>
        <Label $w={39} $c="#b5303f" $bold>2 issues</Label>
        <Rule $h={18} $c="#ececef" />
        <PreviewButton>
          <Play size={10} strokeWidth={2} />
          <ChevronDown size={7} strokeWidth={2.6} />
        </PreviewButton>
        <DeployButton>Upgrade to deploy</DeployButton>
      </EditorBar>

      <Body>
        <Rail>
          <RailItem $active>
            <svg width="11" height="11" viewBox="0 0 12 12" fill="none" stroke="currentColor" strokeWidth="1">
              <path d="M1.500 10.500l.6-3L8 1.600c.5-.5 1.200-.5 1.700 0l.7.7c.5.5.5 1.200 0 1.700L4.500 9.900zM6.800 2.800l2.400 2.400" />
            </svg>
          </RailItem>
          <RailItem $line><WorkflowIcon /></RailItem>
          <RailItem><ReusableIcon /></RailItem>
          <RailItem><Database size={11} strokeWidth={1.8} /></RailItem>
          <RailItem><Braces size={11} strokeWidth={2} /></RailItem>
          <RailItem><Palette size={11} strokeWidth={1.8} /></RailItem>
          <RailItem><Plug size={11} strokeWidth={2} transform="rotate(45)" /></RailItem>
          <RailItem><HexGear /></RailItem>
          <RailItem><BarsIcon /></RailItem>
          <RailFoot>
            <CircleQuestionMark size={10} strokeWidth={1.8} />
            <Avatar $c="#0a0fa6" $s={11}>A</Avatar>
          </RailFoot>
        </Rail>

        <Panel>
          <PanelTabs>
            <PanelTabActive>Builder</PanelTabActive>
            <Label>Responsive</Label>
          </PanelTabs>
          <PluginRow>
            <Zap size={10} strokeWidth={2.2} />
            elemium
            <Spacer />
            <Toggle />
          </PluginRow>
          <SearchRow $h={21}><Search size={10} strokeWidth={1.8} />Search elements</SearchRow>
          <Tree>
            {["Popup envoyer un message", "Popup événement"].map((name) => (
              <TreeRow key={name} $level={0} $dim>
                <Caret />
                <Slot $w={18}><PopupIcon /></Slot>
                {name}
                <HiddenMark><ClosedEye /></HiddenMark>
              </TreeRow>
            ))}
            <TreeRow $level={0} $head>
              <Caret $open $dark />
              <Slot $w={5} />
              <Label>Layers</Label>
            </TreeRow>
            <Nested>
              <TreeRow $level={0} $selected>
                <Caret $open />
                <Slot $w={18}><GroupIcon /></Slot>
                Group CONTENT
              </TreeRow>
              {layers.map((name, i) => (
                <TreeRow key={name} $level={1} $dim={i > 0}>
                  <Caret />
                  <Slot $w={18}><GroupIcon columns={name === "ACTUALITÉ"} /></Slot>
                  {name}
                  {i > 0 && <HiddenMark><ClosedEye /></HiddenMark>}
                </TreeRow>
              ))}
            </Nested>
            <ScrollThumb $top={135} $h={124} />
          </Tree>
          <SearchRow $h={24}><Search size={10} strokeWidth={1.8} />Search assets</SearchRow>
          <Assets>
            <AssetRow $head><Caret $open $dark />Visual Elements</AssetRow>
            {assets.map(([name, icon]) => (
              <AssetRow key={name}>{icon}{name}</AssetRow>
            ))}
            <ScrollThumb $top={1} $h={38} />
          </Assets>
        </Panel>

        <Canvas>
          <Stage>
            <Nav>
              <Profile>
                <Photo>{"Current\nUser's\nPhoto\nprofil:processed\nwith Imgix"}</Photo>
                <UserName>John Doe</UserName>
                <UserRole>Locataire Mobile</UserRole>
                <UserRole>Current User's Emploie</UserRole>
              </Profile>
              <NavLinks>
                <NavItem><MdOutlineHome size={12} />Page d'accueil</NavItem>
                <NavCaption $h={23}>INCIPAL</NavCaption>
                <NavItem><MdOutlineSpaceDashboard size={12} />Tableau de bord</NavItem>
                <NavItem><FaFileLines size={12} />Fil d'actualité</NavItem>
                <NavItem><FaSquareEnvelope size={12} />Boîte de réception</NavItem>
                <NavItem><FaCalendarDays size={12} />Réservations</NavItem>
                <NavItem><FaRegFolderOpen size={12} />Documents</NavItem>
                <NavItem><FaRegCreditCard size={12} />Paiements</NavItem>
                <NavCaption $h={23}>RAMÈTRES</NavCaption>
                <NavItem>
                  <FaGear size={12} />Paramètres
                  <Slot $w={29} />
                  <ChevronDown size={9} strokeWidth={3} />
                </NavItem>
                <NavRule />
                <NavItem><MdHeadsetMic size={12} />Service clients</NavItem>
                <NavItem><FaRightFromBracket size={12} />Déconnexion</NavItem>
              </NavLinks>
            </Nav>

            <Artboard>
              <Sheet>
                <Title>
                  Salut !
                  <Wave>👋</Wave>
                  <Blue>Current User's Prenom</Blue>
                </Title>
                <InfoCard $h={126} $big>
                  <div>
                    <InfoTitle>Informations vérifiées</InfoTitle>
                    <Field $gap={2}>Adresse électronique:<span>Current User's email</span></Field>
                    <Field $gap={5}>Numéro de téléphone:<span>+33 Current User's Numero téléphone</span></Field>
                    <Field $gap={5}>Ville:<span>Current User's Ville</span></Field>
                    <Field $gap={5}>Code postale:<span>Current User's Code postale</span></Field>
                  </div>
                  <AccountIcon />
                </InfoCard>
                <Stats>
                  <StatCard $w={172} $h={87}>
                    <StatHead>Dernier paiement<Slot $w={14}><FaEuroSign size={9} /></Slot></StatHead>
                    <StatValue>222€</StatValue>
                    <StatNote $mt={4}>Votre dernière transaction</StatNote>
                  </StatCard>
                  <StatCard $w={172} $h={105}>
                    <StatHead>Favoris<Slot $w={14}><FaHeart size={10} /></Slot></StatHead>
                    <StatValue>{"Current User's\nLike:count"}</StatValue>
                    <StatNote $mt={3} $light>Véhicules ajouté aux favoris</StatNote>
                  </StatCard>
                  <StatCard $w={172} $h={105}>
                    <StatHead>Annonce<Slot $w={14}><ListCard /></Slot></StatHead>
                    <StatValue>{"Search for\nAnnonces:count"}</StatValue>
                    <StatNote $mt={3} $light>Annonce postée</StatNote>
                  </StatCard>
                </Stats>
                <Bookings $h={154} $big>
                  <GroupTitle>
                    Réservations récentes
                    <small>Vous avez réalisé Search for Reservations:count réservation</small>
                  </GroupTitle>
                  <Booking>
                    <Column $w={60} $first>
                      <Thumb>{"Current\nrow's\nReservation\nVehicule\nmodèle"}</Thumb>
                    </Column>
                    <Column $w={162}>
                      <Strong>Marque et modèle du véhicule</Strong>
                      <Plain>BMW X5</Plain>
                    </Column>
                    <Column $w={101}>
                      <Strong>Début de location</Strong>
                      <Plain>Debut de loc</Plain>
                      <Strong>Fin de location</Strong>
                      <Plain>Fin de loc</Plain>
                    </Column>
                    <Column $w={143}>
                      <Strong>Prix total de la réservation</Strong>
                      <Plain>300€</Plain>
                    </Column>
                    <Column $w={187} $raise={5}>
                      <Strong>Statut de la réservation</Strong>
                      <Plain $h={11}>Statut</Plain>
                    </Column>
                  </Booking>
                </Bookings>
              </Sheet>
            </Artboard>
          </Stage>
          <Handle />
          <BottomScroll />

          <Guide $x={143} $y={11} $w={1} $h={456} $c="#b4d2e8" />
          <Guide $x={838} $y={11} $w={1} $h={456} $c="rgba(150, 195, 228, 0.6)" />
          <Guide $x={490} $y={0} $w={1} $h={545} $c="rgba(235, 50, 75, 0.32)" />
          <Guide $x={1} $y={272} $w={130} $h={1} $c="#d96a5c" />
          <Guide $x={133} $y={341} $w={26} $h={1} $c="#f3a9b4" />
          <Guide $x={823} $y={341} $w={27} $h={1} $c="#f3a9b4" />
          <Measure $x={47} $y={275} $c="#e2603f" $plain>256</Measure>
          <Measure $x={494} $y={159}>543px</Measure>
          <Measure $x={494} $y={444}>314px</Measure>
          <Measure $x={138} $y={342}>45px</Measure>
          <Measure $x={828} $y={342}>45px</Measure>
          <GroupTag><SquareDashed size={8} strokeWidth={2.2} />Group Card Title</GroupTag>
          <SideScroll />
          <PluginTab><Zap size={14} strokeWidth={2.4} /></PluginTab>
          <Chat><ChatLogo /></Chat>
        </Canvas>
      </Body>
    </BrowserWindow>
  </Desktop>
);

export default App;
